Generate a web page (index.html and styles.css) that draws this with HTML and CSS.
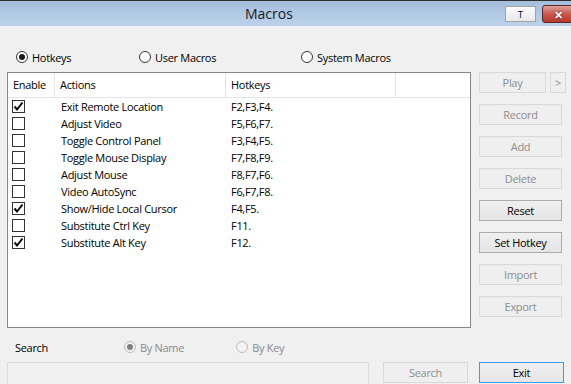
FILE: index.html
```html
<!DOCTYPE html>
<html lang="en">
<head>
    <meta charset="UTF-8">
    <meta name="viewport" content="width=device-width, initial-scale=1.0">
    <title>Macros</title>
    <link rel="stylesheet" href="styles.css">
</head>
<body>
    <div class="window">
        <!-- Title bar -->
        <div class="titlebar">
            <span class="title">Macros</span>
            <span class="tb-btn tb-pin">T</span>
            <span class="tb-btn tb-close">&#x2715;</span>
        </div>

        <div class="content">
            <!-- Macro type -->
            <div class="modes">
                <label class="radio mode-hotkeys"><span class="dot checked"></span>Hotkeys</label>
                <label class="radio mode-user"><span class="dot"></span>User Macros</label>
                <label class="radio mode-system"><span class="dot"></span>System Macros</label>
            </div>

            <div class="main">
                <!-- Macro list -->
                <div class="list">
                    <div class="list-head">
                        <div class="col">Enable</div>
                        <div class="col">Actions</div>
                        <div class="col">Hotkeys</div>
                        <div class="col col-rest"></div>
                    </div>
                    <div class="list-body" id="listBody"></div>
                </div>

                <!-- Side buttons -->
                <div class="side">
                    <div class="play-row">
                        <button class="btn disabled play">Play</button>
                        <button class="btn disabled more">&gt;</button>
                    </div>
                    <button class="btn disabled">Record</button>
                    <button class="btn disabled">Add</button>
                    <button class="btn disabled">Delete</button>
                    <button class="btn">Reset</button>
                    <button class="btn">Set Hotkey</button>
                    <button class="btn disabled">Import</button>
                    <button class="btn disabled">Export</button>
                </div>
            </div>

            <!-- Search -->
            <div class="search-row">
                <span class="search-label">Search</span>
                <label class="radio off by-name"><span class="dot checked"></span>By Name</label>
                <label class="radio off by-key"><span class="dot"></span>By Key</label>
            </div>

            <div class="bottom-row">
                <div class="search-input"></div>
                <button class="btn disabled wide">Search</button>
                <button class="btn default wide">Exit</button>
            </div>
        </div>
    </div>

    <script>
        const macros = [
            { on: true,  name: 'Exit Remote Location', keys: 'F2,F3,F4.' },
            { on: false, name: 'Adjust Video', keys: 'F5,F6,F7.' },
            { on: false, name: 'Toggle Control Panel', keys: 'F3,F4,F5.' },
            { on: false, name: 'Toggle Mouse Display', keys: 'F7,F8,F9.' },
            { on: false, name: 'Adjust Mouse', keys: 'F8,F7,F6.' },
            { on: false, name: 'Video AutoSync', keys: 'F6,F7,F8.' },
            { on: true,  name: 'Show/Hide Local Cursor', keys: 'F4,F5.' },
            { on: false, name: 'Substitute Ctrl Key', keys: 'F11.' },
            { on: true,  name: 'Substitute Alt Key', keys: 'F12.' }
        ];

        const check = '<svg width="11" height="11" viewBox="0 0 11 11"><path d="M1.5 5.5 L4 8.5 L9.5 1.5" fill="none" stroke="#000" stroke-width="2"/></svg>';

        document.getElementById('listBody').innerHTML = macros.map(m => `
            <div class="row">
                <div class="cell-enable"><span class="box">${m.on ? check : ''}</span></div>
                <div class="cell-action">${m.name}</div>
                <div class="cell-keys">${m.keys}</div>
                <div></div>
            </div>`).join('');
    </script>
</body>
</html>
```

FILE: styles.css
```css
* {
    box-sizing: border-box;
}

body {
    margin: 0;
    font-family: "Open Sans", "Noto Sans", sans-serif;
    font-size: 11px;
    letter-spacing: -0.3px;
    color: #000;
    background: #f0f0f0;
}

.window {
    width: 571px;
    height: 384px;
    overflow: hidden;
    background: #f0f0f0;
}

/* Title bar */
.titlebar {
    height: 26px;
    border-top: 1px solid #2e2e2e;
    background: linear-gradient(#a3bedc, #bdd3ec);
    display: flex;
    align-items: flex-start;
}

.title {
    font-size: 14px;
    letter-spacing: 0;
    color: #1b1b1b;
    margin: 3px 0 0 245px;
}

.tb-btn {
    display: flex;
    align-items: center;
    justify-content: center;
    letter-spacing: 0;
}

.tb-pin {
    width: 31px;
    height: 16px;
    margin: 5px 0 0 auto;
    border: 1px solid #a3a3a3;
    background: linear-gradient(#fbfbfb, #e9e9e9);
    font-size: 9px;
}

.tb-close {
    width: 32px;
    height: 18px;
    margin: 4px -3px 0 6px;
    border: 1px solid #5e2424;
    border-radius: 3px;
    background: linear-gradient(#e0a39b, #c7594c 50%, #b53a2c);
    color: #fff;
    font-size: 11px;
    font-weight: bold;
    text-shadow: 0 0 2px #4a1010;
}

.content {
    padding: 0 0 0 7px;
}

/* Radios */
.modes {
    height: 46px;
    display: flex;
    align-items: center;
    padding: 16px 0 0 9px;
}

.radio {
    display: flex;
    align-items: center;
    gap: 4px;
}

.mode-hotkeys { width: 123px; }
.mode-user { width: 162px; }

.dot {
    width: 12px;
    height: 12px;
    border: 1px solid #333;
    border-radius: 50%;
    background: #fff;
    display: flex;
    align-items: center;
    justify-content: center;
}

.dot.checked::after {
    content: "";
    width: 6px;
    height: 6px;
    border-radius: 50%;
    background: #1a1a1a;
}

.radio.off {
    color: #8a8a8a;
}

.radio.off .dot {
    border-color: #bcbcbc;
    background: #f2f2f2;
}

.radio.off .dot.checked::after {
    background: #808080;
}

/* Main area */
.main {
    display: flex;
    align-items: flex-start;
}

.list {
    width: 464px;
    height: 256px;
    border: 1px solid #828790;
    background: #fff;
}

.list-head,
.row {
    display: grid;
    grid-template-columns: 47px 171px 170px 1fr;
}

.list-head {
    height: 25px;
    border-bottom: 1px solid #e5e5e5;
}

.col {
    padding: 4px 0 0 5px;
    border-right: 1px solid #e5e5e5;
}

.col-rest { border-right: none; }

.row {
    height: 17px;
    align-items: center;
}

.cell-enable {
    padding-left: 4px;
    display: flex;
}

.cell-action { padding-left: 6px; }
.cell-keys { padding-left: 5px; }

.box {
    width: 13px;
    height: 13px;
    border: 1px solid #333;
    background: #fff;
    display: flex;
    align-items: center;
    justify-content: center;
}

/* Buttons */
.side {
    display: flex;
    flex-direction: column;
    gap: 11px;
    margin-left: 8px;
}

.play-row {
    display: flex;
    gap: 4px;
}

.btn {
    width: 83px;
    height: 21px;
    padding: 0;
    font-family: inherit;
    font-size: 11px;
    letter-spacing: -0.3px;
    color: #000;
    border: 1px solid #acacac;
    background: linear-gradient(#f0f0f0, #e5e5e5);
}

.btn.disabled {
    color: #8d8d8d;
    border-color: #d9d9d9;
    background: #efefef;
}

.btn.play { width: 67px; }
.btn.more { width: 16px; }

.btn.wide { width: 85px; }

.btn.default {
    border-color: #3c9cf0;
}

/* Search */
.search-row {
    display: flex;
    align-items: center;
    height: 34px;
    padding: 4px 0 0 8px;
}

.search-label {
    width: 109px;
}

.by-key {
    margin-left: 52px;
}

.bottom-row {
    display: flex;
}

.search-input {
    width: 362px;
    height: 24px;
    border: 1px solid #dcdcdc;
    background: #f0f0f0;
    margin-right: 14px;
}

.bottom-row .btn.disabled {
    margin-right: 11px;
}
```
